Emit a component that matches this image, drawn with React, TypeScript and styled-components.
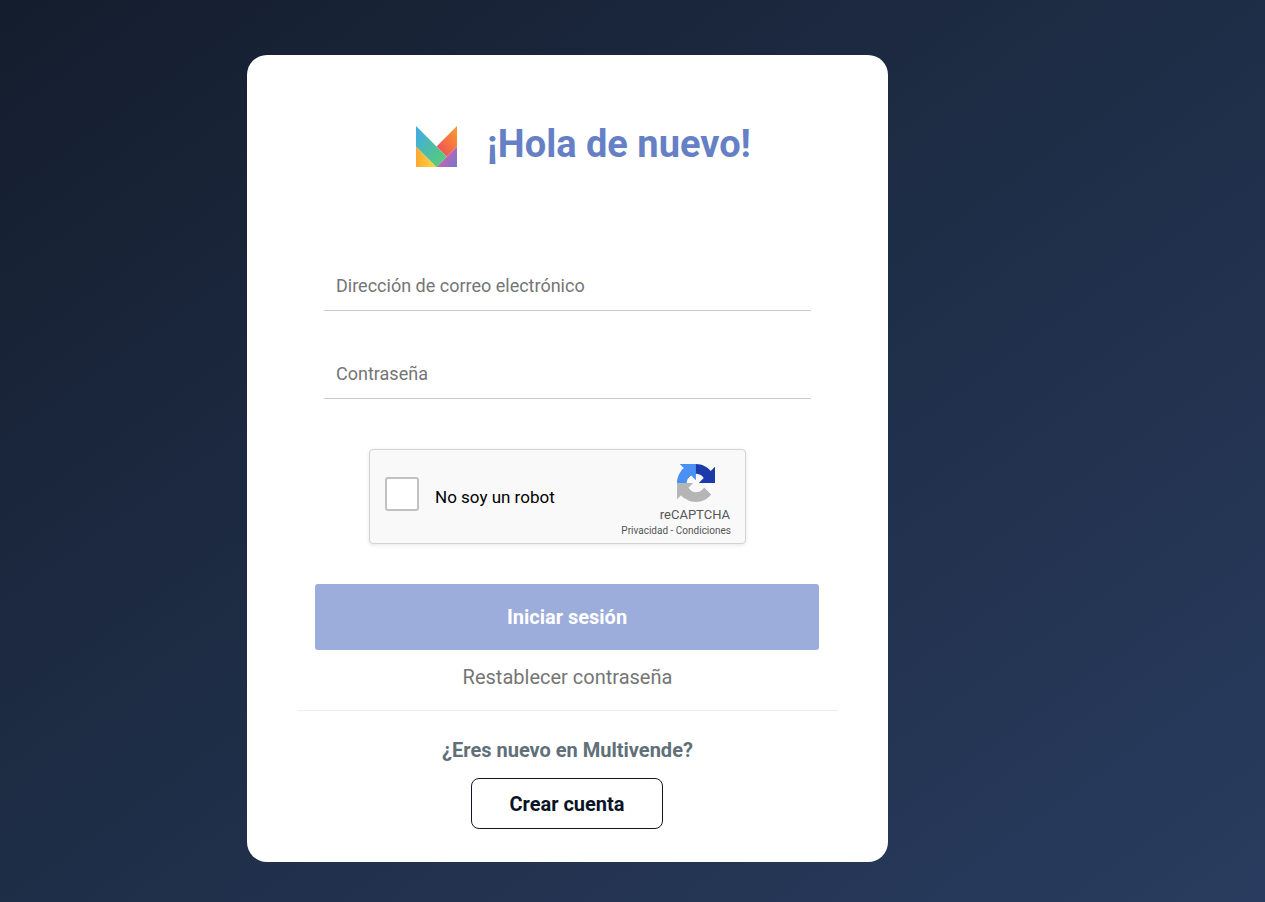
import React from "react";
import styled, { createGlobalStyle } from "styled-components";

const GlobalStyle = createGlobalStyle`
  *, *::before, *::after { box-sizing: border-box; }
  html, body { margin: 0; }
  body {
    font-family: Roboto, "Liberation Sans", sans-serif;
    font-size: 20px;
    background: #1e2b43;
  }
`;

const Page = styled.main`
  min-height: 100vh;
  display: flex;
  flex-direction: column;
  align-items: center;
  padding: 55px 130px 40px 0;
  background: linear-gradient(to bottom right, #141d2d, #1d2b43 42%, #293c5f);
`;

const Card = styled.form`
  width: 100%;
  max-width: 641px;
  padding: 60px 50px 33px;
  display: flex;
  flex-direction: column;
  border-radius: 20px;
  background: #fff;
`;

const Header = styled.header`
  display: flex;
  align-items: center;
  justify-content: center;
  gap: 30px;
  padding-left: 32px;
  height: 58px;
`;

const Logo = styled.svg`
  width: 41px;
  height: 41px;
  margin-top: 4px;
`;

const Title = styled.h1`
  margin: 0;
  font-size: 38px;
  line-height: 58px;
  font-weight: 700;
  color: #6680c6;
`;

const Fields = styled.div`
  display: flex;
  flex-direction: column;
  gap: 37px;
  margin: 87px 27px 0;
`;

const Field = styled.input`
  width: 100%;
  height: 51px;
  padding: 0 12px;
  border: 0;
  border-bottom: 1px solid #ccc;
  border-radius: 0;
  background: transparent;
  font-family: inherit;
  font-size: 18px;
  color: #333;
  outline: none;
  &::placeholder { color: #757575; opacity: 1; }
`;

const Captcha = styled.div`
  align-self: center;
  display: flex;
  align-items: stretch;
  justify-content: space-between;
  width: 377px;
  height: 95px;
  margin: 50px 20px 0 0;
  padding: 0 14px 0 15px;
  border: 1px solid #d3d3d3;
  border-radius: 4px;
  background: #f9f9f9;
  box-shadow: 0 1px 4px rgba(0, 0, 0, 0.1);
`;

const CaptchaLabel = styled.label`
  display: flex;
  align-items: center;
  gap: 16px;
  font-size: 17px;
  line-height: 24px;
  color: #000;
  span { padding-top: 1px; }
`;

const Tick = styled.input`
  appearance: none;
  width: 34px;
  height: 34px;
  margin: 0 0 6px;
  border: 2px solid #c1c1c1;
  border-radius: 3px;
  background: #fff;
`;

const CaptchaBrand = styled.div`
  display: flex;
  flex-direction: column;
  align-items: flex-end;
  padding-top: 14px;
  color: #555;
`;

const CaptchaMark = styled.svg`
  width: 38px;
  height: 38px;
  margin-right: 16px;
`;

const CaptchaName = styled.span`
  margin: 5px 1px 0 0;
  font-size: 13px;
  line-height: 16px;
`;

const CaptchaLinks = styled.span`
  font-size: 10px;
  line-height: 16px;
  a { color: inherit; text-decoration: none; }
`;

const Submit = styled.button`
  height: 66px;
  margin: 40px 19px 0 18px;
  border: 0;
  border-radius: 3px;
  background: #9cacdb;
  color: #fff;
  font-family: inherit;
  font-size: 20px;
  font-weight: 700;
`;

const ResetLink = styled.a`
  align-self: center;
  margin-top: 15px;
  line-height: 24px;
  color: #757575;
  text-decoration: none;
`;

const Divider = styled.hr`
  width: 100%;
  margin: 21px 0 27px;
  border: 0;
  border-top: 1px solid #eee;
`;

const Question = styled.p`
  margin: 0;
  text-align: center;
  font-weight: 700;
  line-height: 24px;
  color: #5f7078;
`;

const Create = styled.button`
  align-self: center;
  width: 192px;
  height: 51px;
  margin: 16px 1px 0 0;
  border: 1px solid #101828;
  border-radius: 8px;
  background: #fff;
  color: #0b1426;
  font-family: inherit;
  font-size: 20px;
  font-weight: 700;
`;

function BrandLogo() {
  return (
    <Logo viewBox="0 0 40 40" aria-hidden="true">
      <defs>
        <linearGradient id="blueGreen" x1="0" y1="0.1" x2="0.9" y2="0.9">
          <stop offset="0" stopColor="#3fade6" />
          <stop offset="0.5" stopColor="#4dbcaa" />
          <stop offset="1" stopColor="#55cd78" />
        </linearGradient>
        <linearGradient id="orangeRed" x1="1" y1="0" x2="0.1" y2="0.9">
          <stop offset="0" stopColor="#fe9a2b" />
          <stop offset="1" stopColor="#ee4f5b" />
        </linearGradient>
        <linearGradient id="yellow" x1="0" y1="0.9" x2="0.8" y2="0.9">
          <stop offset="0" stopColor="#fda831" />
          <stop offset="1" stopColor="#f9d23b" />
        </linearGradient>
        <linearGradient id="violet" x1="0.2" y1="0.5" x2="1" y2="1">
          <stop offset="0" stopColor="#d25db3" />
          <stop offset="1" stopColor="#6e7bcd" />
        </linearGradient>
      </defs>
      <path d="M0 20 20 40H0Z" fill="url(#yellow)" />
      <path d="M40 20V40H20Z" fill="url(#violet)" />
      <path d="M40 0V20L30 30 20 20Z" fill="url(#orangeRed)" />
      <path d="M0 0 30 30 20 40 0 20Z" fill="url(#blueGreen)" />
    </Logo>
  );
}

function RecaptchaMark() {
  return (
    <CaptchaMark viewBox="0 0 64 64" aria-hidden="true">
      <path
        fill="#1c3aa9"
        d="M64 31.955l-.033-1.370V4.687l-7.160 7.160C50.948 4.674 42.033.093 32.050.093c-10.389 0-19.622 4.960-25.458 12.640l11.736 11.860a15.550 15.550 0 0 1 4.754-5.334c2.050-1.600 4.952-2.906 8.968-2.906.485 0 .860.057 1.135.163 4.976.393 9.288 3.140 11.828 7.124l-8.307 8.307L64 31.953"
      />
      <path
        fill="#4a90f5"
        d="M31.862.094l-1.370.033H4.594l7.160 7.160C4.580 13.147 0 22.060 0 32.046c0 10.390 4.960 19.622 12.640 25.458L24.500 45.768a15.550 15.550 0 0 1-5.334-4.754c-1.600-2.050-2.906-4.952-2.906-8.968 0-.485.057-.860.163-1.135.393-4.976 3.140-9.288 7.124-11.828l8.307 8.307L31.860.095"
      />
      <path
        fill="#b5b5b5"
        d="M.001 32.045l.033 1.370v25.898l7.160-7.160c5.860 7.173 14.774 11.754 24.760 11.754 10.390 0 19.622-4.960 25.458-12.640l-11.736-11.860a15.550 15.550 0 0 1-4.754 5.334c-2.050 1.600-4.952 2.906-8.968 2.906-.485 0-.860-.057-1.135-.163-4.976-.393-9.288-3.140-11.828-7.124l8.307-8.307c-10.522.040-22.400.066-27.295-.005"
      />
    </CaptchaMark>
  );
}

export default function App() {
  return (
    <>
      <GlobalStyle />
      <Page>
        <Card onSubmit={(event: React.FormEvent) => event.preventDefault()}>
          <Header>
            <BrandLogo />
            <Title>¡Hola de nuevo!</Title>
          </Header>
          <Fields>
            <Field
              type="email"
              placeholder="Dirección de correo electrónico"
              aria-label="Dirección de correo electrónico"
            />
            <Field type="password" placeholder="Contraseña" aria-label="Contraseña" />
          </Fields>
          <Captcha>
            <CaptchaLabel htmlFor="robot">
              <Tick id="robot" type="checkbox" />
              <span>No soy un robot</span>
            </CaptchaLabel>
            <CaptchaBrand>
              <RecaptchaMark />
              <CaptchaName>reCAPTCHA</CaptchaName>
              <CaptchaLinks>
                <a href="#privacidad">Privacidad</a> - <a href="#condiciones">Condiciones</a>
              </CaptchaLinks>
            </CaptchaBrand>
          </Captcha>
          <Submit type="submit">Iniciar sesión</Submit>
          <ResetLink href="#restablecer">Restablecer contraseña</ResetLink>
          <Divider />
          <Question>¿Eres nuevo en Multivende?</Question>
          <Create type="button">Crear cuenta</Create>
        </Card>
      </Page>
    </>
  );
}
